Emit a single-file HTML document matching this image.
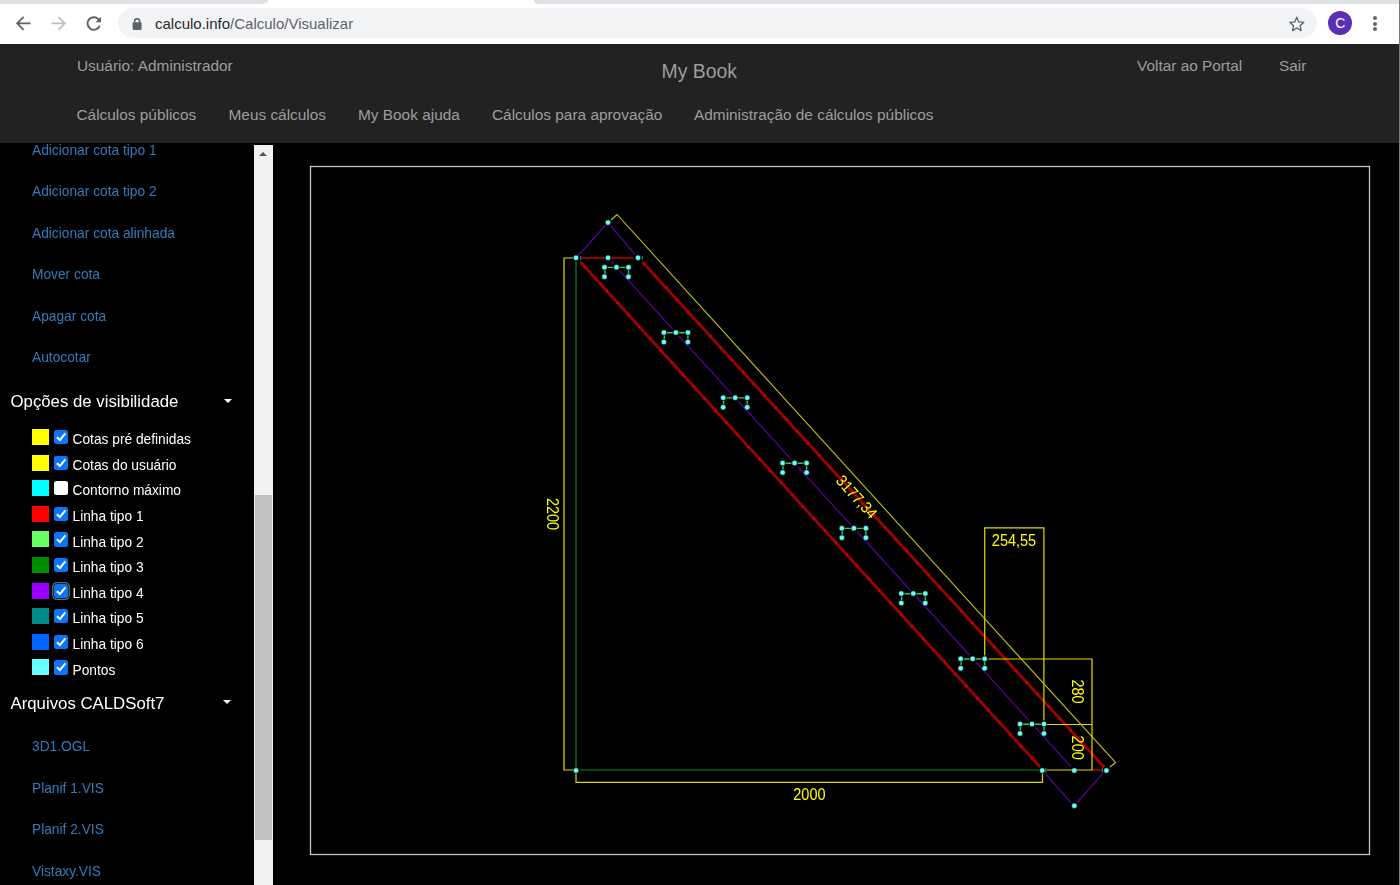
<!DOCTYPE html>
<html><head><meta charset="utf-8">
<style>
*{margin:0;padding:0;box-sizing:border-box}
html,body{width:1400px;height:885px;overflow:hidden;background:#000;font-family:"Liberation Sans",sans-serif}
.a{position:absolute;white-space:nowrap;line-height:1}
#chrome{position:absolute;left:0;top:0;width:1400px;height:44px;background:#fff}
#tabs{position:absolute;left:0;top:0;width:267.7px;height:3.6px;background:#dee1e6;border-bottom-right-radius:6px 3.6px}
#tabw{position:absolute;left:533.5px;top:0;width:867px;height:3.6px;background:#dee1e6;border-bottom-left-radius:5.5px 3.6px}
#omni{position:absolute;left:118px;top:8px;width:1199px;height:30px;border-radius:15px;background:#f1f3f4}
#url{left:155px;top:16px;font-size:15px;color:#5f6368}
#url b{font-weight:normal;color:#2a2b2e}
#nav{position:absolute;left:0;top:44px;width:1400px;height:99px;background:#222}
.nv{font-size:15.4px;color:#9d9d9d}
.sl{font-size:13.75px;color:#337ab7}
.hd{font-size:16.8px;color:#fff}
.ck{font-size:13.75px;color:#fff}
.sq{position:absolute;left:32px;width:17px;height:16px}
.cb{position:absolute;left:54px;width:14.3px;height:14.3px;border-radius:2.5px;background:#0b75f7}
.cb svg{position:absolute;left:0;top:0}
#sb{position:absolute;left:254px;top:145px;width:19px;height:740px;background:#f1f1f1}
#thumb{position:absolute;left:255px;top:495px;width:17px;height:345px;background:#c1c1c1}
#edge{position:absolute;left:1399px;top:0;width:1px;height:885px;background:#7c7c7c}
</style></head><body>
<div id="chrome">
  <div id="tabs"></div><div id="tabw"></div>
  <svg class="a" style="left:0;top:0" width="120" height="44">
    <g fill="none" stroke="#5f6368" stroke-width="1.8">
      <path d="M30.5 23.3H17.5M23.6 16.8L17.2 23.3L23.6 29.8"/>
    </g>
    <g fill="none" stroke="#bdc1c6" stroke-width="1.8">
      <path d="M51.5 23.3H64.5M58.4 16.8L64.8 23.3L58.4 29.8"/>
    </g>
    <g fill="none" stroke="#5f6368" stroke-width="1.9">
      <path d="M99.2 20.2A6.3 6.3 0 1 0 99.8 25.5"/>
    </g>
    <path d="M101 16.8V22.3H95.5Z" fill="#5f6368"/>
  </svg>
  <div id="omni"></div>
  <svg class="a" style="left:130px;top:15.8px" width="14" height="16">
    <rect x="2.6" y="6.3" width="9" height="7.6" rx="0.8" fill="#5f6368"/>
    <path d="M4.6 6.6V5.2A2.5 2.5 0 0 1 9.6 5.2V6.6" fill="none" stroke="#5f6368" stroke-width="1.6"/>
  </svg>
  <div class="a" id="url"><b>calculo.info</b>/Calculo/Visualizar</div>
  <svg class="a" style="left:1286px;top:13px" width="22" height="20">
    <path transform="translate(10.8 11) scale(0.87) translate(-10.8 -11)" d="M10.8 3.2L13.1 8.6L18.9 9.1L14.5 12.9L15.8 18.6L10.8 15.6L5.8 18.6L7.1 12.9L2.7 9.1L8.5 8.6Z" fill="none" stroke="#5f6368" stroke-width="1.5" stroke-linejoin="round"/>
  </svg>
  <div class="a" style="left:1328.3px;top:11.4px;width:24px;height:24px;border-radius:50%;background:#5a2fb3"></div>
  <div class="a" style="left:1328.3px;top:16.4px;width:24px;text-align:center;font-size:14px;color:#fff">C</div>
  <div class="a" style="left:1373.3px;top:16px;width:4px;height:4px;border-radius:50%;background:#5f6368"></div>
  <div class="a" style="left:1373.3px;top:21.5px;width:4px;height:4px;border-radius:50%;background:#5f6368"></div>
  <div class="a" style="left:1373.3px;top:27px;width:4px;height:4px;border-radius:50%;background:#5f6368"></div>
</div>

<div id="nav">
  <div class="a nv" style="left:77px;top:14px">Usuário: Administrador</div>
  <div class="a nv" style="left:661.5px;top:18px;font-size:19.4px">My Book</div>
  <div class="a nv" style="left:1137px;top:14px">Voltar ao Portal</div>
  <div class="a nv" style="left:1279px;top:14px">Sair</div>
  <div class="a nv" style="left:76.5px;top:63px">Cálculos públicos</div>
  <div class="a nv" style="left:228.5px;top:63px">Meus cálculos</div>
  <div class="a nv" style="left:358px;top:63px">My Book ajuda</div>
  <div class="a nv" style="left:492px;top:63px">Cálculos para aprovação</div>
  <div class="a nv" style="left:694px;top:63px">Administração de cálculos públicos</div>
</div>

<!-- sidebar -->
<div id="side" style="position:absolute;left:0;top:0;width:1400px;height:885px;will-change:transform">
<div class="a sl" style="left:32px;top:144px">Adicionar cota tipo 1</div>
<div class="a sl" style="left:32px;top:185px">Adicionar cota tipo 2</div>
<div class="a sl" style="left:32px;top:227px">Adicionar cota alinhada</div>
<div class="a sl" style="left:32px;top:268px">Mover cota</div>
<div class="a sl" style="left:32px;top:310px">Apagar cota</div>
<div class="a sl" style="left:32px;top:351px">Autocotar</div>
<div class="a hd" style="left:10.5px;top:393.6px">Opções de visibilidade</div>
<div class="a" style="left:224px;top:399px;width:0;height:0;border-left:4px solid transparent;border-right:4px solid transparent;border-top:4.5px solid #fff"></div>

<div class="sq" style="top:429.0px;background:#ffff00"></div>
<div class="cb" style="top:429.9px"><svg width="15" height="15"><path d="M2.9 7.3L5.9 10.1L11.4 3.3" fill="none" stroke="#fff" stroke-width="2"/></svg></div>
<div class="a ck" style="left:72.5px;top:433.1px">Cotas pré definidas</div>
<div class="sq" style="top:454.6px;background:#ffff00"></div>
<div class="cb" style="top:455.5px"><svg width="15" height="15"><path d="M2.9 7.3L5.9 10.1L11.4 3.3" fill="none" stroke="#fff" stroke-width="2"/></svg></div>
<div class="a ck" style="left:72.5px;top:458.7px">Cotas do usuário</div>
<div class="sq" style="top:480.2px;background:#00ffff"></div>
<div class="cb" style="top:481.1px;background:#fff"></div>
<div class="a ck" style="left:72.5px;top:484.3px">Contorno máximo</div>
<div class="sq" style="top:505.8px;background:#ff0000"></div>
<div class="cb" style="top:506.7px"><svg width="15" height="15"><path d="M2.9 7.3L5.9 10.1L11.4 3.3" fill="none" stroke="#fff" stroke-width="2"/></svg></div>
<div class="a ck" style="left:72.5px;top:509.9px">Linha tipo 1</div>
<div class="sq" style="top:531.4px;background:#66ff66"></div>
<div class="cb" style="top:532.3px"><svg width="15" height="15"><path d="M2.9 7.3L5.9 10.1L11.4 3.3" fill="none" stroke="#fff" stroke-width="2"/></svg></div>
<div class="a ck" style="left:72.5px;top:535.5px">Linha tipo 2</div>
<div class="sq" style="top:557.0px;background:#008c00"></div>
<div class="cb" style="top:557.9px"><svg width="15" height="15"><path d="M2.9 7.3L5.9 10.1L11.4 3.3" fill="none" stroke="#fff" stroke-width="2"/></svg></div>
<div class="a ck" style="left:72.5px;top:561.1px">Linha tipo 3</div>
<div class="sq" style="top:582.6px;background:#9900ff"></div>
<div class="cb" style="top:583.5px;box-shadow:0 0 0 0.7px #000,0 0 0 1.7px #8a8a8a"><svg width="15" height="15"><path d="M2.9 7.3L5.9 10.1L11.4 3.3" fill="none" stroke="#fff" stroke-width="2"/></svg></div>
<div class="a ck" style="left:72.5px;top:586.7px">Linha tipo 4</div>
<div class="sq" style="top:608.2px;background:#008b8b"></div>
<div class="cb" style="top:609.1px"><svg width="15" height="15"><path d="M2.9 7.3L5.9 10.1L11.4 3.3" fill="none" stroke="#fff" stroke-width="2"/></svg></div>
<div class="a ck" style="left:72.5px;top:612.3px">Linha tipo 5</div>
<div class="sq" style="top:633.8px;background:#0066ff"></div>
<div class="cb" style="top:634.7px"><svg width="15" height="15"><path d="M2.9 7.3L5.9 10.1L11.4 3.3" fill="none" stroke="#fff" stroke-width="2"/></svg></div>
<div class="a ck" style="left:72.5px;top:637.9px">Linha tipo 6</div>
<div class="sq" style="top:659.4px;background:#66ffff"></div>
<div class="cb" style="top:660.3px"><svg width="15" height="15"><path d="M2.9 7.3L5.9 10.1L11.4 3.3" fill="none" stroke="#fff" stroke-width="2"/></svg></div>
<div class="a ck" style="left:72.5px;top:663.5px">Pontos</div>

<div class="a hd" style="left:10.5px;top:695.6px">Arquivos CALDSoft7</div>
<div class="a" style="left:223px;top:700px;width:0;height:0;border-left:4px solid transparent;border-right:4px solid transparent;border-top:4.5px solid #fff"></div>
<div class="a sl" style="left:32px;top:740px">3D1.OGL</div>
<div class="a sl" style="left:32px;top:782px">Planif 1.VIS</div>
<div class="a sl" style="left:32px;top:823px">Planif 2.VIS</div>
<div class="a sl" style="left:32px;top:865px">Vistaxy.VIS</div>

<div id="sb"></div>
<div id="thumb"></div>
<div class="a" style="left:258.9px;top:151.9px;width:0;height:0;border-left:4.6px solid transparent;border-right:4.6px solid transparent;border-bottom:4.9px solid #555"></div>

<!-- drawing -->
<svg class="a" style="left:0;top:0" width="1400" height="885" id="draw">
<rect x="310.5" y="166.5" width="1059" height="688" fill="none" stroke="#c8c8c8" stroke-width="1.3"/>
<path d="M581 258H605M611 258H633.5M1092.6 770H1101.5" fill="none" stroke="#900000" stroke-width="2"/>
<path d="M580.44 262.04L1040.04 767.01M642.45 262.03L1104.04 767.02" fill="none" stroke="#a00000" stroke-width="2.8"/>
<path d="M576.4 257.6L1042.4 769.6" fill="none" stroke="#d80000" stroke-width="3.0" stroke-dasharray="1.3 14.9" stroke-dashoffset="4.15"/>
<path d="M638.4 257.6L1106.4 769.6" fill="none" stroke="#d80000" stroke-width="3.0" stroke-dasharray="1.3 14.9" stroke-dashoffset="7.95"/>
<path d="M578.01 255.77L605.32 225.47M610.90 225.94L635.10 254.56M1044.99 773.36L1071.01 802.64M1076.99 802.64L1103.01 773.36M611.23 261.55L613.40 263.94M619.73 270.89L672.76 329.16M679.09 336.11L732.12 394.38M738.45 401.33L791.48 459.60M797.81 466.55L850.84 524.82M857.17 531.77L910.20 590.03M916.53 596.99L969.56 655.25M975.89 662.21L1028.92 720.47M1035.25 727.43L1070.90 766.60" fill="none" stroke="#5c00a4" stroke-width="1.2"/>
<path d="M576 261V768M580 770H1039" fill="none" stroke="#008c00" stroke-width="1.2"/>
<path d="M573 258H564V770H573M576 773.5V782.4H1042.5V773.5M984.7 655.5V527.8H1043.9V720.5M988.5 659H1092V770H1046.5M1047 724.5H1092" fill="none" stroke="#dcdc00" stroke-width="1.2"/>
<path d="M611 220L617 214.5L1115.5 762.5L1110 767" fill="none" stroke="#c4c400" stroke-width="1.1"/>
<path d="M580.6 256V260M642.3 256V260M1045.8 768V772.5M1102.3 768V772.5" fill="none" stroke="#1f7a78" stroke-width="1.2"/>
<path d="M607.7 267.4H613.3M619.7 267.4H625.3M604.9 270.2V273.7M628.5 270.2V273.7" fill="none" stroke="#4cc04c" stroke-width="1.4"/>
<path d="M667.1 332.7H672.7M679.1 332.7H684.7M664.3 335.5V339.0M687.9 335.5V339.0" fill="none" stroke="#4cc04c" stroke-width="1.4"/>
<path d="M726.4 397.9H732.0M738.4 397.9H744.0M723.6 400.7V404.2M747.2 400.7V404.2" fill="none" stroke="#4cc04c" stroke-width="1.4"/>
<path d="M785.8 463.2H791.4M797.8 463.2H803.4M783.0 466.0V469.5M806.6 466.0V469.5" fill="none" stroke="#4cc04c" stroke-width="1.4"/>
<path d="M845.1 528.4H850.7M857.1 528.4H862.7M842.3 531.2V534.7M865.9 531.2V534.7" fill="none" stroke="#4cc04c" stroke-width="1.4"/>
<path d="M904.5 593.7H910.1M916.5 593.7H922.1M901.7 596.5V600.0M925.3 596.5V600.0" fill="none" stroke="#4cc04c" stroke-width="1.4"/>
<path d="M963.9 659.0H969.5M975.9 659.0H981.5M961.1 661.8V665.3M984.7 661.8V665.3" fill="none" stroke="#4cc04c" stroke-width="1.4"/>
<path d="M1023.2 724.2H1028.8M1035.2 724.2H1040.8M1020.4 727.0V730.5M1044.0 727.0V730.5" fill="none" stroke="#4cc04c" stroke-width="1.4"/>
<circle cx="576.0" cy="257.8" r="2.85" fill="#3fa6a2" fill-opacity="0.5"/><circle cx="576.0" cy="257.8" r="2.25" fill="#66fff6"/>
<circle cx="608.0" cy="257.8" r="2.85" fill="#3fa6a2" fill-opacity="0.5"/><circle cx="608.0" cy="257.8" r="2.25" fill="#66fff6"/>
<circle cx="638.0" cy="257.8" r="2.85" fill="#3fa6a2" fill-opacity="0.5"/><circle cx="638.0" cy="257.8" r="2.25" fill="#66fff6"/>
<circle cx="608.0" cy="222.5" r="2.85" fill="#3fa6a2" fill-opacity="0.5"/><circle cx="608.0" cy="222.5" r="2.25" fill="#66fff6"/>
<circle cx="576.0" cy="770.4" r="2.85" fill="#3fa6a2" fill-opacity="0.5"/><circle cx="576.0" cy="770.4" r="2.25" fill="#66fff6"/>
<circle cx="1042.2" cy="770.5" r="2.85" fill="#3fa6a2" fill-opacity="0.5"/><circle cx="1042.2" cy="770.5" r="2.25" fill="#66fff6"/>
<circle cx="1074.3" cy="770.5" r="2.85" fill="#3fa6a2" fill-opacity="0.5"/><circle cx="1074.3" cy="770.5" r="2.25" fill="#66fff6"/>
<circle cx="1106.4" cy="770.5" r="2.85" fill="#3fa6a2" fill-opacity="0.5"/><circle cx="1106.4" cy="770.5" r="2.25" fill="#66fff6"/>
<circle cx="1074.3" cy="805.8" r="2.85" fill="#3fa6a2" fill-opacity="0.5"/><circle cx="1074.3" cy="805.8" r="2.25" fill="#66fff6"/>
<circle cx="604.5" cy="267.2" r="2.85" fill="#3fa6a2" fill-opacity="0.5"/><circle cx="604.5" cy="267.2" r="2.25" fill="#66fff6"/>
<circle cx="616.5" cy="267.2" r="2.85" fill="#3fa6a2" fill-opacity="0.5"/><circle cx="616.5" cy="267.2" r="2.25" fill="#66fff6"/>
<circle cx="628.5" cy="267.2" r="2.85" fill="#3fa6a2" fill-opacity="0.5"/><circle cx="628.5" cy="267.2" r="2.25" fill="#66fff6"/>
<circle cx="604.5" cy="276.7" r="2.85" fill="#3fa6a2" fill-opacity="0.5"/><circle cx="604.5" cy="276.7" r="2.25" fill="#66fff6"/>
<circle cx="628.5" cy="276.7" r="2.85" fill="#3fa6a2" fill-opacity="0.5"/><circle cx="628.5" cy="276.7" r="2.25" fill="#66fff6"/>
<circle cx="663.9" cy="332.5" r="2.85" fill="#3fa6a2" fill-opacity="0.5"/><circle cx="663.9" cy="332.5" r="2.25" fill="#66fff6"/>
<circle cx="675.9" cy="332.5" r="2.85" fill="#3fa6a2" fill-opacity="0.5"/><circle cx="675.9" cy="332.5" r="2.25" fill="#66fff6"/>
<circle cx="687.9" cy="332.5" r="2.85" fill="#3fa6a2" fill-opacity="0.5"/><circle cx="687.9" cy="332.5" r="2.25" fill="#66fff6"/>
<circle cx="663.9" cy="342.0" r="2.85" fill="#3fa6a2" fill-opacity="0.5"/><circle cx="663.9" cy="342.0" r="2.25" fill="#66fff6"/>
<circle cx="687.9" cy="342.0" r="2.85" fill="#3fa6a2" fill-opacity="0.5"/><circle cx="687.9" cy="342.0" r="2.25" fill="#66fff6"/>
<circle cx="723.2" cy="397.7" r="2.85" fill="#3fa6a2" fill-opacity="0.5"/><circle cx="723.2" cy="397.7" r="2.25" fill="#66fff6"/>
<circle cx="735.2" cy="397.7" r="2.85" fill="#3fa6a2" fill-opacity="0.5"/><circle cx="735.2" cy="397.7" r="2.25" fill="#66fff6"/>
<circle cx="747.2" cy="397.7" r="2.85" fill="#3fa6a2" fill-opacity="0.5"/><circle cx="747.2" cy="397.7" r="2.25" fill="#66fff6"/>
<circle cx="723.2" cy="407.2" r="2.85" fill="#3fa6a2" fill-opacity="0.5"/><circle cx="723.2" cy="407.2" r="2.25" fill="#66fff6"/>
<circle cx="747.2" cy="407.2" r="2.85" fill="#3fa6a2" fill-opacity="0.5"/><circle cx="747.2" cy="407.2" r="2.25" fill="#66fff6"/>
<circle cx="782.6" cy="463.0" r="2.85" fill="#3fa6a2" fill-opacity="0.5"/><circle cx="782.6" cy="463.0" r="2.25" fill="#66fff6"/>
<circle cx="794.6" cy="463.0" r="2.85" fill="#3fa6a2" fill-opacity="0.5"/><circle cx="794.6" cy="463.0" r="2.25" fill="#66fff6"/>
<circle cx="806.6" cy="463.0" r="2.85" fill="#3fa6a2" fill-opacity="0.5"/><circle cx="806.6" cy="463.0" r="2.25" fill="#66fff6"/>
<circle cx="782.6" cy="472.5" r="2.85" fill="#3fa6a2" fill-opacity="0.5"/><circle cx="782.6" cy="472.5" r="2.25" fill="#66fff6"/>
<circle cx="806.6" cy="472.5" r="2.85" fill="#3fa6a2" fill-opacity="0.5"/><circle cx="806.6" cy="472.5" r="2.25" fill="#66fff6"/>
<circle cx="841.9" cy="528.2" r="2.85" fill="#3fa6a2" fill-opacity="0.5"/><circle cx="841.9" cy="528.2" r="2.25" fill="#66fff6"/>
<circle cx="853.9" cy="528.2" r="2.85" fill="#3fa6a2" fill-opacity="0.5"/><circle cx="853.9" cy="528.2" r="2.25" fill="#66fff6"/>
<circle cx="865.9" cy="528.2" r="2.85" fill="#3fa6a2" fill-opacity="0.5"/><circle cx="865.9" cy="528.2" r="2.25" fill="#66fff6"/>
<circle cx="841.9" cy="537.7" r="2.85" fill="#3fa6a2" fill-opacity="0.5"/><circle cx="841.9" cy="537.7" r="2.25" fill="#66fff6"/>
<circle cx="865.9" cy="537.7" r="2.85" fill="#3fa6a2" fill-opacity="0.5"/><circle cx="865.9" cy="537.7" r="2.25" fill="#66fff6"/>
<circle cx="901.3" cy="593.5" r="2.85" fill="#3fa6a2" fill-opacity="0.5"/><circle cx="901.3" cy="593.5" r="2.25" fill="#66fff6"/>
<circle cx="913.3" cy="593.5" r="2.85" fill="#3fa6a2" fill-opacity="0.5"/><circle cx="913.3" cy="593.5" r="2.25" fill="#66fff6"/>
<circle cx="925.3" cy="593.5" r="2.85" fill="#3fa6a2" fill-opacity="0.5"/><circle cx="925.3" cy="593.5" r="2.25" fill="#66fff6"/>
<circle cx="901.3" cy="603.0" r="2.85" fill="#3fa6a2" fill-opacity="0.5"/><circle cx="901.3" cy="603.0" r="2.25" fill="#66fff6"/>
<circle cx="925.3" cy="603.0" r="2.85" fill="#3fa6a2" fill-opacity="0.5"/><circle cx="925.3" cy="603.0" r="2.25" fill="#66fff6"/>
<circle cx="960.7" cy="658.8" r="2.85" fill="#3fa6a2" fill-opacity="0.5"/><circle cx="960.7" cy="658.8" r="2.25" fill="#66fff6"/>
<circle cx="972.7" cy="658.8" r="2.85" fill="#3fa6a2" fill-opacity="0.5"/><circle cx="972.7" cy="658.8" r="2.25" fill="#66fff6"/>
<circle cx="984.7" cy="658.8" r="2.85" fill="#3fa6a2" fill-opacity="0.5"/><circle cx="984.7" cy="658.8" r="2.25" fill="#66fff6"/>
<circle cx="960.7" cy="668.3" r="2.85" fill="#3fa6a2" fill-opacity="0.5"/><circle cx="960.7" cy="668.3" r="2.25" fill="#66fff6"/>
<circle cx="984.7" cy="668.3" r="2.85" fill="#3fa6a2" fill-opacity="0.5"/><circle cx="984.7" cy="668.3" r="2.25" fill="#66fff6"/>
<circle cx="1020.0" cy="724.0" r="2.85" fill="#3fa6a2" fill-opacity="0.5"/><circle cx="1020.0" cy="724.0" r="2.25" fill="#66fff6"/>
<circle cx="1032.0" cy="724.0" r="2.85" fill="#3fa6a2" fill-opacity="0.5"/><circle cx="1032.0" cy="724.0" r="2.25" fill="#66fff6"/>
<circle cx="1044.0" cy="724.0" r="2.85" fill="#3fa6a2" fill-opacity="0.5"/><circle cx="1044.0" cy="724.0" r="2.25" fill="#66fff6"/>
<circle cx="1020.0" cy="733.5" r="2.85" fill="#3fa6a2" fill-opacity="0.5"/><circle cx="1020.0" cy="733.5" r="2.25" fill="#66fff6"/>
<circle cx="1044.0" cy="733.5" r="2.85" fill="#3fa6a2" fill-opacity="0.5"/><circle cx="1044.0" cy="733.5" r="2.25" fill="#66fff6"/>
<g fill="#ffff00" font-family="Liberation Sans" font-size="14.5" text-anchor="middle">
<text transform="translate(1014 540.4) rotate(0) scale(1 1.1)" y="5.15">254,55</text>
<text transform="translate(809.4 794.4) rotate(0) scale(1 1.1)" y="5.15">2000</text>
<text transform="translate(552.5 514) rotate(90) scale(1 1.1)" y="5.15">2200</text>
<text transform="translate(1078 691.5) rotate(90) scale(1 1.1)" y="5.15">280</text>
<text transform="translate(1078 747.7) rotate(90) scale(1 1.1)" y="5.15">200</text>
<text transform="translate(856.8 496.8) rotate(47.7) scale(1 1.1)" y="5.15">3177,34</text>
</g>
</svg>
</div>
<div id="edge"></div>
</body></html>
